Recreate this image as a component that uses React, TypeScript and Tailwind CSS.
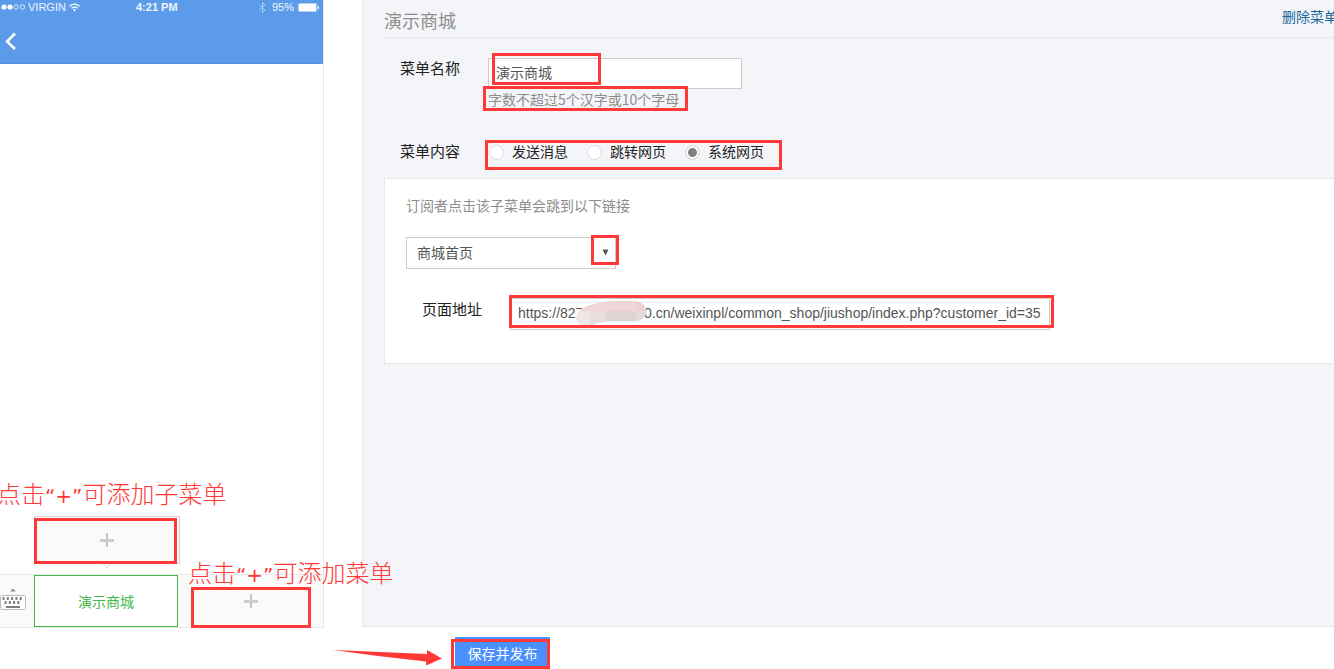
import React, { useState } from "react";

const contentTypes = [
  { value: "message", label: "发送消息" },
  { value: "redirect", label: "跳转网页" },
  { value: "system", label: "系统网页" },
];

// Red outline that marks the step to take
const Frame: React.FC<{ className: string }> = ({ className }) => (
  <span className={`pointer-events-none absolute z-10 border-3 border-[#ff3838] ${className}`} />
);

const Note: React.FC<{ className: string; target: string }> = ({ className, target }) => (
  <p className={`pointer-events-none absolute z-20 whitespace-nowrap text-2xl leading-8 font-light text-[#ff3838] ${className}`}>
    点击
    <span className="font-['DejaVu_Sans'] text-xl font-normal">“+”</span>
    可添加{target}
  </p>
);

const PlusIcon = () => (
  <svg className="h-4 w-4" viewBox="0 0 16 16" aria-hidden="true">
    <path d="M8 1v14" stroke="#c4c4c4" strokeWidth="2" />
    <path d="M1 8.500h14" stroke="#cccccc" strokeWidth="3" />
  </svg>
);

const KeyboardIcon = () => (
  <svg className="h-6 w-[26px]" viewBox="0 0 26 24" aria-hidden="true">
    <path d="M10.500 2.500Q11 0 13 0t2.500 2.500z" fill="#85888d" />
    <rect x="0.500" y="6.500" width="25" height="14" rx="1" fill="#fff" stroke="#b9bbbe" />
    <path d="M2.500 9.500h20" stroke="#7b7f85" strokeWidth="3" strokeDasharray="2 2.300" />
    <path d="M4.500 13.500h16" stroke="#7b7f85" strokeWidth="3" strokeDasharray="2 2.300" />
    <path d="M6 18h14" stroke="#7b7f85" strokeWidth="2" />
  </svg>
);

const StatusBar = () => (
  <div className="grid h-[14px] grid-cols-3 items-center px-px font-['Liberation_Sans',sans-serif] text-[11px] leading-[14px] text-white/90">
    <div className="flex items-center">
      <svg className="mr-px h-2 w-[26px]" viewBox="0 0 26 8" aria-hidden="true">
        <circle cx="3" cy="4" r="2.600" fill="#fff" />
        <circle cx="9" cy="4" r="2.600" fill="#fff" />
        <circle cx="15" cy="4" r="2.200" fill="none" stroke="#fff" strokeWidth="0.700" />
        <circle cx="21.500" cy="4" r="2.200" fill="none" stroke="#fff" strokeWidth="0.700" />
      </svg>
      <span>VIRGIN</span>
      <svg className="ml-[3px] h-[9px] w-[11px]" viewBox="0 0 11 9" fill="none" stroke="#fff" strokeWidth="1.300" aria-hidden="true">
        <path d="M0.500 3.200Q5.500 -1 10.500 3.200" />
        <path d="M2.500 5.300Q5.500 3 8.500 5.300" />
        <path d="M4 6.500L5.500 8.500L7 6.500Q5.500 5.500 4 6.500z" fill="#fff" stroke="none" />
      </svg>
    </div>
    <span className="pl-[28px] font-bold">4:21 PM</span>
    <div className="flex items-center justify-end pr-0.5">
      <svg className="mr-1.5 h-[11px] w-[7px]" viewBox="0 0 7 11" fill="none" stroke="#a9caf5" aria-hidden="true">
        <path d="M0.500 3L6 8L3.500 10.500V0.500L6 3L0.500 8" />
      </svg>
      <span>95%</span>
      <svg className="ml-1 h-[9px] w-[22px]" viewBox="0 0 22 9" aria-hidden="true">
        <rect x="0.500" y="0.500" width="18.500" height="8" rx="1" fill="none" stroke="#b6d2f6" />
        <rect x="1" y="1" width="17" height="7" rx="0.500" fill="#fff" />
        <path d="M20 3q1.500 1.500 0 3z" fill="#fff" stroke="#d2e3fa" />
      </svg>
    </div>
  </div>
);

const PhonePreview = () => (
  <section className="relative flex min-h-[628px] w-[324px] shrink-0 flex-col border-r border-[#e7e7eb] bg-white">
    <header className="h-16 border-b border-[#5490dd] bg-[#5c9bea]">
      <StatusBar />
      <button type="button" aria-label="返回" className="mt-[18px] ml-[5px] block">
        <svg className="h-[18px] w-3" viewBox="0 0 12 18" fill="none" stroke="#fff" strokeWidth="2.500" aria-hidden="true">
          <path d="M10 1.500L2 9.500L10 17" />
        </svg>
      </button>
    </header>

    <nav className="relative mt-auto flex h-[54px] border-y border-[#e7e7eb] bg-[#fafafa]">
      <div className="flex w-[34px] shrink-0 items-center">
        <KeyboardIcon />
      </div>
      <div className="relative w-36 shrink-0">
        <button type="button" className="h-full w-full border border-[#44b549] bg-white text-sm text-[#44b549]">
          演示商城
        </button>
        {/* sub menu popup */}
        <div className="absolute bottom-[63px] left-0 h-12 w-[146px] border border-[#d0d0d0] bg-[#fafafa]">
          <button type="button" aria-label="添加子菜单" className="flex h-full w-full items-center justify-center">
            <PlusIcon />
          </button>
          <svg className="absolute top-full left-[66px] h-1.5 w-3" viewBox="0 0 12 6" aria-hidden="true">
            <path d="M1 0L6 5L11 0" fill="#fafafa" stroke="#d8d8d8" />
          </svg>
          <Frame className="-left-px top-px h-[46px] w-[143px]" />
          <Note className="bottom-[53px] -left-[38px]" target="子菜单" />
        </div>
      </div>
      <div className="relative flex-1">
        <button type="button" aria-label="添加菜单" className="flex h-full w-full items-center justify-center">
          <PlusIcon />
        </button>
        <Frame className="top-3 left-[13px] h-[41px] w-[120px]" />
        <Note className="-top-[19px] left-2.5" target="菜单" />
      </div>
    </nav>
  </section>
);

const MenuEditor = () => {
  const [name, setName] = useState("演示商城");
  const [type, setType] = useState("system");
  const [url, setUrl] = useState(
    "https://8270000.w000.cn/weixinpl/common_shop/jiushop/index.php?customer_id=35"
  );

  return (
    <section className="mb-px ml-[38px] min-w-0 flex-1 overflow-hidden border-b border-l border-[#e7e7eb] bg-[#f4f5f9] pl-[21px]">
      <header className="flex items-start justify-between border-b border-[#e7e7eb] pt-2 pb-[5px]">
        <h1 className="text-lg leading-6 text-[#8d8d8d]">演示商城</h1>
        <a href="#delete" className="-mr-1 text-sm leading-4 text-[#1a6a9c]">
          删除菜单
        </a>
      </header>

      <div className="flex pt-5 pl-4">
        <label htmlFor="menu-name" className="w-[88px] shrink-0 text-[15px] leading-5">
          菜单名称
        </label>
        <div className="relative">
          <input
            id="menu-name"
            type="text"
            value={name}
            onChange={(e) => setName(e.target.value)}
            className="block h-[31px] w-[254px] border border-[#cccccc] bg-white px-[7px] pb-[3px] text-sm text-[#555555] outline-none"
          />
          <Frame className="-top-[5px] left-1 h-8 w-[109px]" />
          <div className="relative">
            <p className="text-sm leading-5 text-[#8d8d8d]">字数不超过5个汉字或10个字母</p>
            <Frame className="-top-[3px] -left-[5px] h-[25px] w-[205px]" />
          </div>
        </div>
      </div>

      <div role="radiogroup" aria-labelledby="menu-type" className="mt-8 flex pl-4">
        <span id="menu-type" className="w-[88px] shrink-0 text-[15px] leading-5">
          菜单内容
        </span>
        <div className="relative flex gap-[19px] pb-0.5 pl-px">
          {contentTypes.map((item) => (
            <label key={item.value} className="flex items-start gap-2 text-sm leading-5">
              <input
                type="radio"
                name="type"
                value={item.value}
                checked={type === item.value}
                onChange={() => setType(item.value)}
                className="mt-1 h-[15px] w-[15px] appearance-none rounded-full border border-[#dcdde2] bg-white bg-clip-padding checked:bg-[#7f7f7f] checked:shadow-[inset_0_0_0_2px_#fff]"
              />
              {item.label}
            </label>
          ))}
          <Frame className="-top-px -left-[3px] h-[30px] w-[297px]" />
        </div>
      </div>

      <div className="mt-[15px] border-y border-l border-[#e7e7eb] bg-white pt-4 pb-[33px] pl-[21px]">
        <p className="text-sm leading-5 text-[#8d8d8d]">订阅者点击该子菜单会跳到以下链接</p>
        <div className="relative mt-[22px] w-[210px]">
          <select
            aria-label="系统网页"
            className="block h-8 w-full appearance-none border border-[#cccccc] bg-white px-2.5 pb-0.5 text-sm text-[#555555] outline-none"
          >
            <option>商城首页</option>
          </select>
          <svg className="pointer-events-none absolute top-3 right-[7px] h-[7px] w-[7px]" viewBox="0 0 7 7" aria-hidden="true">
            <path d="M0.500 0.500h6L3.500 6.500z" fill="#555555" />
          </svg>
          <Frame className="-top-0.5 left-[185px] h-[30px] w-7" />
        </div>
        <div className="mt-[29px] flex pl-4">
          <label htmlFor="page-url" className="w-[88px] shrink-0 text-[15px] leading-[22px]">
            页面地址
          </label>
          <div className="relative w-[540px]">
            <input
              id="page-url"
              type="text"
              value={url}
              onChange={(e) => setUrl(e.target.value)}
              className="block h-8 w-full border border-[#cccccc] bg-white px-[7px] pb-0.5 font-['Liberation_Sans',sans-serif] text-sm text-[#555555] outline-none"
            />
            {/* smudge over the shop's domain */}
            <svg className="pointer-events-none absolute top-0.5 left-[66px] h-7 w-[71px]" viewBox="0 0 71 28" aria-hidden="true">
              <clipPath id="smudge">
                <path d="M0 18Q1 12 5 9Q20 1 42 1H60Q70 3 70 12Q70 19 61 21L32 21Q22 22 13 26H6Q1 24 0 18z" />
              </clipPath>
              <g clipPath="url(#smudge)">
                <rect width="71" height="28" fill="#eedddd" />
                <rect width="71" height="11" fill="#f0d6d7" />
                <rect x="60" width="11" height="11" fill="#edd2d3" />
                <rect y="11" width="14" height="17" fill="#f1e6e6" />
                <rect x="14" y="11" width="16" height="17" fill="#e9dddd" />
                <rect x="30" y="11" width="30" height="11" fill="#dfd3d3" />
                <rect x="60" y="11" width="11" height="11" fill="#e7dada" />
              </g>
            </svg>
            <Frame className="-top-[3px] -left-px h-[33px] w-[545px]" />
          </div>
        </div>
      </div>
    </section>
  );
};

export default function App() {
  return (
    <div className="overflow-hidden bg-white font-['Noto_Sans_CJK_SC',sans-serif] text-[#222222]">
      <main className="flex">
        <PhonePreview />
        <MenuEditor />
      </main>
      <footer className="flex items-start gap-3 pt-[9px] pl-[333px]">
        <svg className="mt-3 h-5 w-[110px]" viewBox="0 0 110 20" aria-hidden="true">
          <path d="M0 1L94 5V1L109 9.500L93 16.500V12.500L45 7z" fill="#ff3838" />
        </svg>
        <div className="relative">
          <button type="button" className="block h-8 w-[95px] bg-[#4a90ff] text-sm text-white">
            保存并发布
          </button>
          <Frame className="top-0.5 -left-1 h-[30px] w-[99px]" />
        </div>
      </footer>
    </div>
  );
}
